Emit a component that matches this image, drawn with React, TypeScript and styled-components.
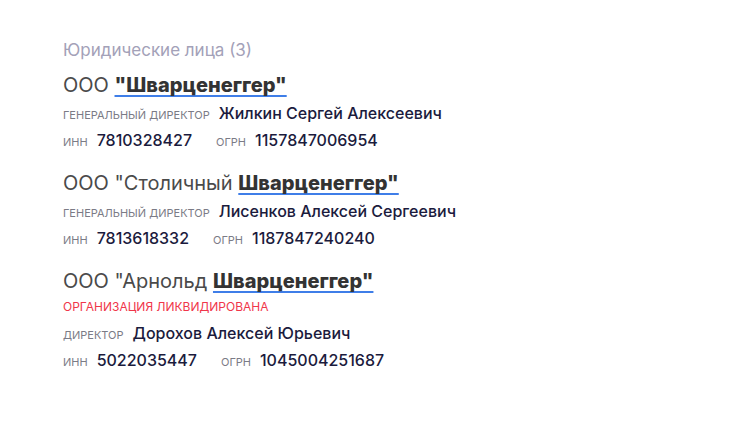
import styled, { createGlobalStyle } from "styled-components";

type Company = {
  prefix: string;
  name: string;
  liquidated?: boolean;
  role: string;
  person: string;
  inn: string;
  ogrn: string;
};

const companies: Company[] = [
  {
    prefix: "ООО ",
    name: "\"Шварценеггер\"",
    role: "Генеральный директор",
    person: "Жилкин Сергей Алексеевич",
    inn: "7810328427",
    ogrn: "1157847006954",
  },
  {
    prefix: "ООО \"Столичный ",
    name: "Шварценеггер\"",
    role: "Генеральный директор",
    person: "Лисенков Алексей Сергеевич",
    inn: "7813618332",
    ogrn: "1187847240240",
  },
  {
    prefix: "ООО \"Арнольд ",
    name: "Шварценеггер\"",
    liquidated: true,
    role: "Директор",
    person: "Дорохов Алексей Юрьевич",
    inn: "5022035447",
    ogrn: "1045004251687",
  },
];

const GlobalStyle = createGlobalStyle`
  body {
    margin: 0;
    background: #ffffff;
    font-family: Inter, "Noto Sans", sans-serif;
  }
`;

const Page = styled.main`
  padding: 38px 63px;
  display: flex;
  flex-direction: column;
`;

const Heading = styled.h2`
  margin: 0 0 9px;
  font-size: 17px;
  font-weight: 400;
  color: #a3a1b8;
  line-height: 24px;
`;

const List = styled.div`
  display: flex;
  flex-direction: column;
  gap: 15px;
`;

const Card = styled.section`
  display: flex;
  flex-direction: column;
`;

const Title = styled.div`
  font-size: 20px;
  line-height: 28px;
  color: #4a4a4a;
  margin-bottom: 1px;
`;

const NameLink = styled.a`
  font-weight: 800;
  color: #333333;
  text-decoration: underline;
  text-decoration-color: #3f7ee8;
  text-decoration-thickness: 2px;
  text-underline-offset: 3px;
  text-decoration-skip-ink: none;
`;

const Status = styled.div`
  font-size: 12px;
  line-height: 20px;
  color: #f0364a;
  text-transform: uppercase;
  margin: 1px 0 3px;
`;

const Row = styled.div`
  display: flex;
  align-items: baseline;
  height: 27px;
  line-height: 27px;
`;

const Label = styled.span<{ $gap?: number }>`
  font-size: 11px;
  text-transform: uppercase;
  color: #7b7b86;
  margin-right: 9px;
  margin-left: ${(p) => p.$gap ?? 0}px;
`;

const Value = styled.span`
  font-size: 16px;
  font-weight: 500;
  color: #1b1b3d;
`;

export default function App() {
  return (
    <>
      <GlobalStyle />
      <Page>
        <Heading>Юридические лица (3)</Heading>
        <List>
          {companies.map((c) => (
            <Card key={c.inn}>
              <Title>
                {c.prefix}
                <NameLink>{c.name}</NameLink>
              </Title>
              {c.liquidated && <Status>Организация ликвидирована</Status>}
              <Row>
                <Label>{c.role}</Label>
                <Value>{c.person}</Value>
              </Row>
              <Row>
                <Label>ИНН</Label>
                <Value>{c.inn}</Value>
                <Label $gap={24}>ОГРН</Label>
                <Value>{c.ogrn}</Value>
              </Row>
            </Card>
          ))}
        </List>
      </Page>
    </>
  );
}
